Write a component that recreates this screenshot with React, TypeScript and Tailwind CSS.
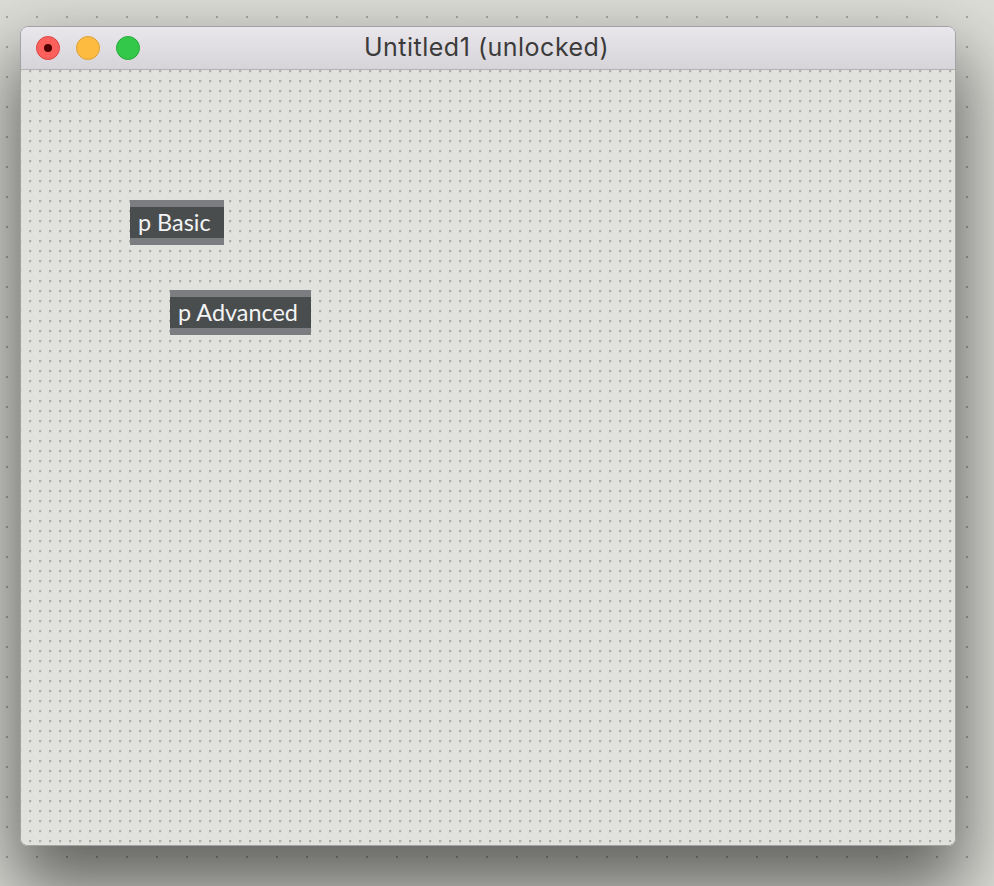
import React from "react";

function Box({ label, className }: { label: string; className: string }) {
  return (
    <div className={"absolute flex flex-col " + className}>
      <div className="h-[7px] bg-[#7c7d80]" />
      <div className="h-[31px] bg-[#4a4d4d] pl-[8px] pr-[13px] flex items-center text-[23.4px] leading-none font-normal text-[#f2f4f6] font-['Lato','Noto_Sans',sans-serif] whitespace-nowrap">
        {label}
      </div>
      <div className="h-[7px] bg-[#7c7d80]" />
    </div>
  );
}

export default function App() {
  return (
    <div className="w-[994px] h-[886px] overflow-hidden bg-[#dcddd7] bg-[radial-gradient(circle_at_1px_1px,#a6a7a2_1px,transparent_1.6px)] bg-[size:30px_30px] bg-[position:6px_16px] pt-[26px] pl-[20px]">
      <div className="w-[936px] h-[820px] rounded-[8px] overflow-hidden flex flex-col border border-[#a3a3a5] shadow-[0_36px_70px_8px_rgba(0,0,0,0.55)]">
        <div className="h-[43px] shrink-0 bg-[linear-gradient(#e9e7eb,#d6d4d8)] border-b border-[#b3b2b5] flex items-center relative">
          <div className="flex items-center gap-[16px] pl-[15px]">
            <div className="w-[24px] h-[24px] rounded-full bg-[#fc605c] border border-[#e0443f] flex items-center justify-center">
              <div className="w-[8px] h-[8px] rounded-full bg-[#4d0000]" />
            </div>
            <div className="w-[24px] h-[24px] rounded-full bg-[#fdbc40] border border-[#de9f34]" />
            <div className="w-[24px] h-[24px] rounded-full bg-[#34c84a] border border-[#27a83a]" />
          </div>
          <div className="absolute inset-0 flex items-center justify-center pr-[3px] text-[25px] tracking-[0.5px] text-[#3b3b3b] font-['Inter','Noto_Sans',sans-serif] pointer-events-none">
            Untitled1 (unlocked)
          </div>
        </div>
        <div className="relative flex-1 bg-[#e1e1dd] bg-[radial-gradient(circle_at_1px_1px,#b0b0ab_1.2px,transparent_1.7px)] bg-[size:10px_10px] bg-[position:8px_0px]">
          <Box label="p Basic" className="left-[109px] top-[130px]" />
          <Box label="p Advanced" className="left-[149px] top-[220px]" />
        </div>
      </div>
    </div>
  );
}
